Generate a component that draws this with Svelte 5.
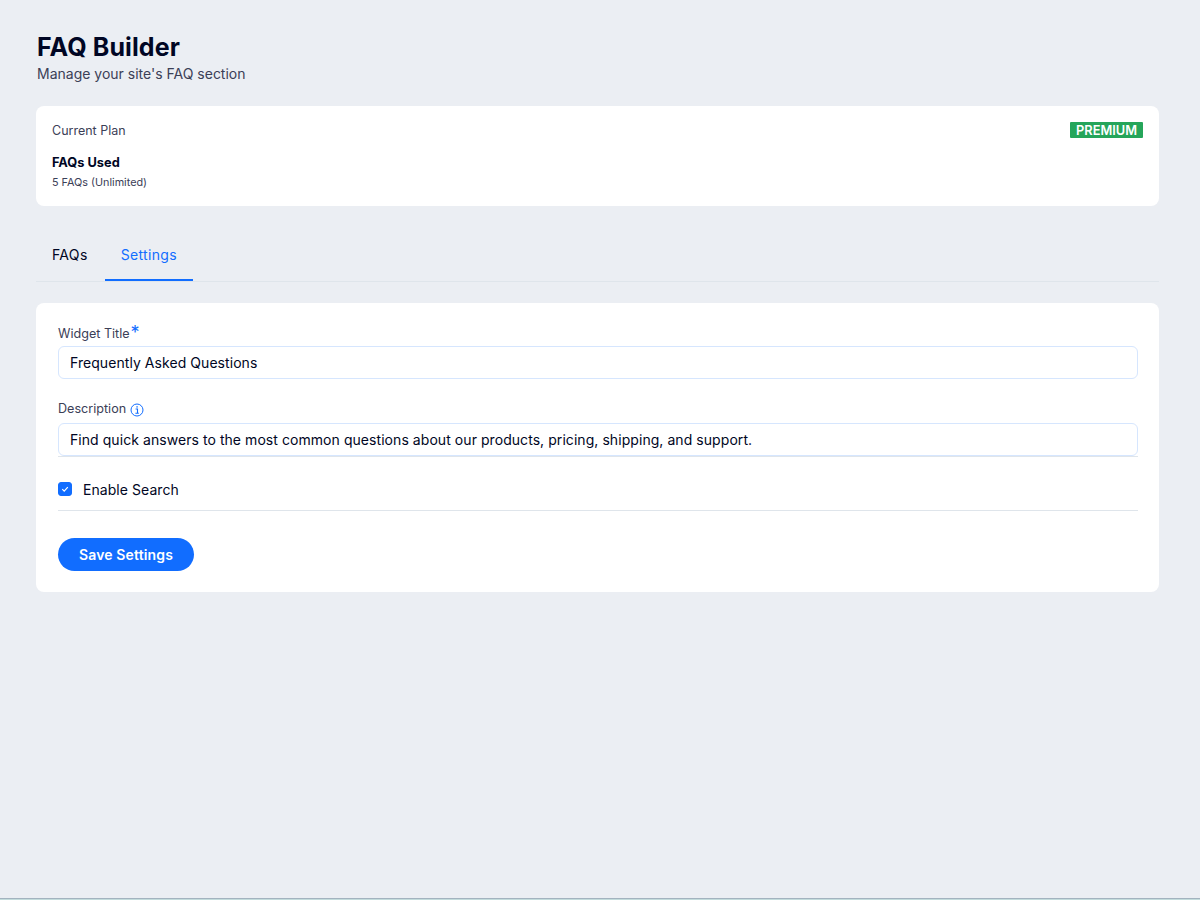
<script>
  let widgetTitle = $state('Frequently Asked Questions');
  let description = $state('Find quick answers to the most common questions about our products, pricing, shipping, and support.');
  let enableSearch = $state(true);
  let activeTab = $state('Settings');
  const tabs = ['FAQs', 'Settings'];
</script>

<div class="page">
  <header class="page-header">
    <h1>FAQ Builder</h1>
    <p>Manage your site's FAQ section</p>
  </header>

  <section class="card plan-card">
    <div class="plan-top">
      <span class="plan-label">Current Plan</span>
      <span class="badge">PREMIUM</span>
    </div>
    <div class="plan-used">FAQs Used</div>
    <div class="plan-count">5 FAQs (Unlimited)</div>
  </section>

  <nav class="tabs">
    {#each tabs as tab}
      <button type="button" class="tab" class:active={activeTab === tab} onclick={() => (activeTab = tab)}>{tab}</button>
    {/each}
  </nav>

  <section class="card settings-card">
    <div class="field">
      <label for="widget-title">Widget Title<span class="required">*</span></label>
      <input id="widget-title" type="text" bind:value={widgetTitle} />
    </div>

    <div class="field description">
      <label for="description">
        Description
        <svg class="info" viewBox="0 0 14 14" width="14" height="14" aria-hidden="true">
          <circle cx="7" cy="7" r="6" fill="none" stroke="currentColor" stroke-width="1" />
          <rect x="6.4" y="3.2" width="1.3" height="1.4" fill="currentColor" />
          <path d="M5.6 6h1.9v4M5.4 10.2h3.4" fill="none" stroke="currentColor" stroke-width="1.1" />
        </svg>
      </label>
      <div class="underlined">
        <input id="description" type="text" bind:value={description} />
      </div>
    </div>

    <label class="check-row">
      <input class="native" type="checkbox" bind:checked={enableSearch} />
      <span class="box" class:on={enableSearch}>
        <svg viewBox="0 0 14 14" width="14" height="14" aria-hidden="true">
          <path d="M4.3 7.2l1.9 1.9 3.6-4" fill="none" stroke="#fff" stroke-width="1.2" />
        </svg>
      </span>
      <span>Enable Search</span>
    </label>

    <button type="button" class="save">Save Settings</button>
  </section>
</div>

<style>
  :global(body) {
    margin: 0;
    background: #ebeef3;
    font-family: 'Inter', 'Noto Sans', sans-serif;
    color: #000624;
  }

  .page {
    box-sizing: border-box;
    height: 900px;
    padding: 32px 41px 0 36px;
    border-bottom: 1px solid #c3dcdc;
    box-shadow: inset 0 -1px #a3b3bf;
  }

  .page-header h1 {
    margin: 0;
    padding-left: 1px;
    font-size: 25px;
    line-height: 30px;
    font-weight: 700;
    letter-spacing: 0.1px;
    color: #000624;
  }

  .page-header p {
    margin: 3px 0 0;
    padding-left: 1px;
    font-size: 14px;
    line-height: 18px;
    color: #3b4057;
  }

  .card {
    background: #fff;
    border-radius: 8px;
  }

  .plan-card {
    margin-top: 23px;
    height: 100px;
    box-sizing: border-box;
    padding: 16px 16px 0;
  }

  .plan-top {
    display: flex;
    justify-content: space-between;
    align-items: flex-start;
    font-size: 12.5px;
    line-height: 17px;
    color: #3b4057;
  }

  .badge {
    background: #25a55a;
    color: #fff;
    font-size: 12.8px;
    font-weight: 600;
    line-height: 15px;
    padding: 1px 6px 0;
    border-radius: 1px;
  }

  .plan-used {
    margin-top: 16px;
    font-size: 12.8px;
    line-height: 16px;
    font-weight: 700;
  }

  .plan-count {
    margin-top: 4px;
    font-size: 10.8px;
    line-height: 16px;
    color: #3b4057;
  }

  .tabs {
    display: flex;
    margin-top: 22px;
    height: 53px;
    border-bottom: 1px solid #dfe5eb;
  }

  .tab {
    border: 0;
    background: none;
    padding: 1px 16px 0;
    margin: 0 1px 0 0;
    font: inherit;
    font-size: 14px;
    letter-spacing: 0.34px;
    color: #000624;
    cursor: pointer;
    border-bottom: 2px solid transparent;
  }

  .tab.active {
    color: #116dff;
    border-bottom-color: #116dff;
  }

  .settings-card {
    margin-top: 21px;
    height: 289px;
    box-sizing: border-box;
    padding: 20px 21px 0 22px;
  }

  .field label {
    display: flex;
    align-items: center;
    gap: 4px;
    box-sizing: border-box;
    height: 23px;
    padding-bottom: 2px;
    font-size: 12.6px;
    color: #3b4057;
  }

  .required {
    margin-left: -3px;
    color: #116dff;
    font-size: 18px;
    font-weight: 400;
    line-height: 18px;
    align-self: flex-start;
    margin-top: 1px;
  }

  .field input {
    display: block;
    box-sizing: border-box;
    width: 100%;
    height: 33px;
    padding: 0 11px;
    border: 1px solid #d6e6fe;
    border-radius: 6px;
    outline: none;
    background: #fff;
    font: inherit;
    font-size: 14px;
    letter-spacing: 0.06px;
    color: #000624;
  }

  .description {
    margin-top: 21px;
  }

  .description label {
    padding-bottom: 6px;
  }

  .underlined {
    border-bottom: 1px solid #dfe5eb;
  }

  .info {
    color: #116dff;
    margin-top: 3px;
  }

  .check-row {
    display: flex;
    align-items: center;
    gap: 11px;
    box-sizing: border-box;
    height: 54px;
    padding-top: 11px;
    border-bottom: 1px solid #dfe5eb;
    font-size: 14px;
    letter-spacing: 0.06px;
    color: #000624;
    cursor: pointer;
  }

  .native {
    position: absolute;
    opacity: 0;
    width: 0;
    height: 0;
  }

  .box {
    display: block;
    width: 14px;
    height: 14px;
    border-radius: 3px;
    border: 1px solid #116dff;
    box-sizing: border-box;
    background: #fff;
  }

  .box svg {
    display: block;
    margin: -1px;
  }

  .box.on {
    background: #116dff;
  }

  .save {
    display: block;
    margin-top: 27px;
    width: 136px;
    height: 33px;
    border: 0;
    border-radius: 17px;
    background: #116dff;
    color: #fff;
    font: inherit;
    font-size: 14px;
    font-weight: 600;
    letter-spacing: 0.15px;
    cursor: pointer;
  }
</style>
